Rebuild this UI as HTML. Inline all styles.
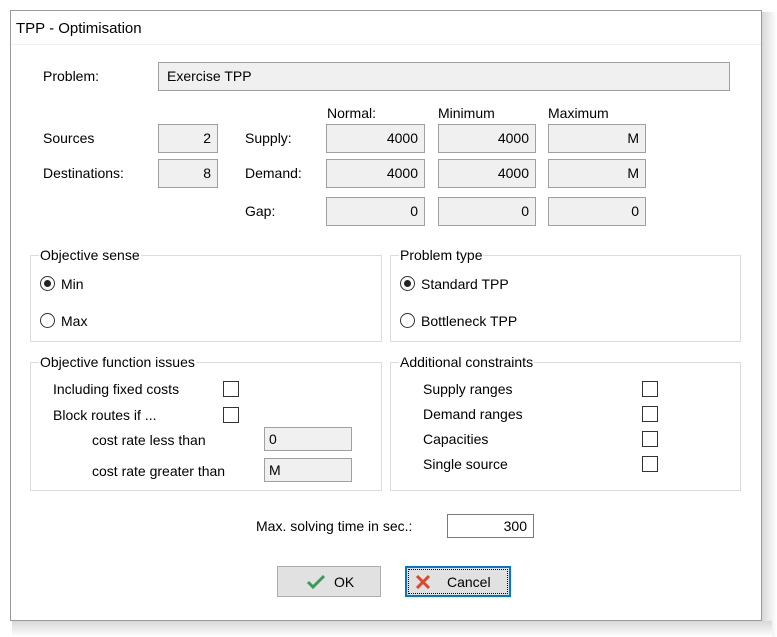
<!DOCTYPE html>
<html><head><meta charset="utf-8"><style>
body{margin:0;width:777px;height:637px;background:#fff;position:relative;overflow:hidden;font-family:"Liberation Sans",sans-serif;font-size:14px;color:#000}
.a{position:absolute;white-space:nowrap}
.f{position:absolute;box-sizing:border-box;background:#f0f0f0;border:1px solid #a0a0a0;text-align:right;padding-right:6px;line-height:26px;font-size:14px}
.g{position:absolute;box-sizing:border-box;border:1px solid #dcdcdc}
.gt{position:absolute;top:-10px;left:8px;background:#fff;padding:0 1px;line-height:18px}
.cb{position:absolute;box-sizing:border-box;width:16px;height:16px;border:1px solid #333;background:#fff}
.rd{position:absolute;box-sizing:border-box;width:15px;height:15px;border:1px solid #333;border-radius:50%;background:#fff}
.rd.on::after{content:"";position:absolute;left:3px;top:3px;width:7px;height:7px;border-radius:50%;background:#222}
.btn{position:absolute;box-sizing:border-box;background:#e1e1e1;border:1px solid #adadad;text-align:center;line-height:28px}
</style></head><body>
<div class="a" style="left:762px;top:12px;width:15px;height:625px;background:linear-gradient(90deg,#d8d8d8,#fff)"></div>
<div class="a" style="left:12px;top:621px;width:760px;height:16px;background:linear-gradient(180deg,#d8d8d8,#fff)"></div>
<div class="a" style="left:10px;top:10px;width:752px;height:611px;box-sizing:border-box;border:1px solid #9a9a9a;background:#fff"></div>
<div class="a" style="left:11px;top:44px;width:750px;height:1px;background:#f0f0f0"></div>
<div class="a" style="left:16px;top:20px;font-size:15px">TPP - Optimisation</div>

<div class="a" style="left:43px;top:68px">Problem:</div>
<div class="f" style="left:158px;top:62px;width:572px;height:29px;text-align:left;padding-left:8px;padding-right:0">Exercise TPP</div>

<div class="a" style="left:327px;top:105px">Normal:</div>
<div class="a" style="left:438px;top:105px">Minimum</div>
<div class="a" style="left:548px;top:105px">Maximum</div>

<div class="a" style="left:43px;top:130px">Sources</div>
<div class="f" style="left:158px;top:124px;width:60px;height:29px">2</div>
<div class="a" style="left:43px;top:165px">Destinations:</div>
<div class="f" style="left:158px;top:159px;width:60px;height:29px">8</div>

<div class="a" style="left:245px;top:130px">Supply:</div>
<div class="a" style="left:245px;top:165px">Demand:</div>
<div class="a" style="left:245px;top:203px">Gap:</div>

<div class="f" style="left:326px;top:124px;width:99px;height:29px">4000</div>
<div class="f" style="left:438px;top:124px;width:98px;height:29px">4000</div>
<div class="f" style="left:548px;top:124px;width:98px;height:29px">M</div>
<div class="f" style="left:326px;top:159px;width:99px;height:29px">4000</div>
<div class="f" style="left:438px;top:159px;width:98px;height:29px">4000</div>
<div class="f" style="left:548px;top:159px;width:98px;height:29px">M</div>
<div class="f" style="left:326px;top:197px;width:99px;height:29px">0</div>
<div class="f" style="left:438px;top:197px;width:98px;height:29px">0</div>
<div class="f" style="left:548px;top:197px;width:98px;height:29px">0</div>

<div class="g" style="left:30px;top:255px;width:352px;height:87px"><span class="gt">Objective sense</span></div>
<div class="rd on" style="left:40px;top:276px"></div><div class="a" style="left:61px;top:276px">Min</div>
<div class="rd" style="left:40px;top:313px"></div><div class="a" style="left:61px;top:313px">Max</div>

<div class="g" style="left:390px;top:255px;width:351px;height:87px"><span class="gt">Problem type</span></div>
<div class="rd on" style="left:400px;top:276px"></div><div class="a" style="left:421px;top:276px">Standard TPP</div>
<div class="rd" style="left:400px;top:313px"></div><div class="a" style="left:421px;top:313px">Bottleneck TPP</div>

<div class="g" style="left:30px;top:362px;width:352px;height:129px"><span class="gt">Objective function issues</span></div>
<div class="a" style="left:53px;top:381px">Including fixed costs</div>
<div class="cb" style="left:223px;top:381px"></div>
<div class="a" style="left:53px;top:407px">Block routes if ...</div>
<div class="cb" style="left:223px;top:407px"></div>
<div class="a" style="left:92px;top:432px">cost rate less than</div>
<div class="f" style="left:264px;top:427px;width:88px;height:24px;text-align:left;padding-left:4px;line-height:22px">0</div>
<div class="a" style="left:92px;top:463px">cost rate greater than</div>
<div class="f" style="left:264px;top:458px;width:88px;height:24px;text-align:left;padding-left:4px;line-height:22px">M</div>

<div class="g" style="left:390px;top:362px;width:351px;height:129px"><span class="gt">Additional constraints</span></div>
<div class="a" style="left:423px;top:381px">Supply ranges</div><div class="cb" style="left:642px;top:381px"></div>
<div class="a" style="left:423px;top:406px">Demand ranges</div><div class="cb" style="left:642px;top:406px"></div>
<div class="a" style="left:423px;top:431px">Capacities</div><div class="cb" style="left:642px;top:431px"></div>
<div class="a" style="left:423px;top:456px">Single source</div><div class="cb" style="left:642px;top:456px"></div>

<div class="a" style="left:256px;top:518px">Max. solving time in sec.:</div>
<div class="f" style="left:447px;top:514px;width:87px;height:24px;background:#fff;line-height:22px;border-color:#7a7a7a">300</div>

<div class="btn" style="left:277px;top:566px;width:104px;height:31px">
<svg style="position:absolute;left:28px;top:7px" width="20" height="16" viewBox="0 0 20 16"><path d="M2 8 L7 13 L18 2" fill="none" stroke="#3a9a5a" stroke-width="3"/></svg>
<span style="position:absolute;left:56px;top:1px">OK</span></div>
<div class="btn" style="left:405px;top:566px;width:106px;height:31px;border:2px solid #0078d7">
<div style="position:absolute;left:1px;top:1px;right:1px;bottom:1px;border:1px dotted #000"></div>
<svg style="position:absolute;left:8px;top:6px" width="16" height="16" viewBox="0 0 16 16"><path d="M2 2 L14 14 M14 2 L2 14" stroke="#e0452b" stroke-width="3"/></svg>
<span style="position:absolute;left:40px;top:0px">Cancel</span></div>
</body></html>
